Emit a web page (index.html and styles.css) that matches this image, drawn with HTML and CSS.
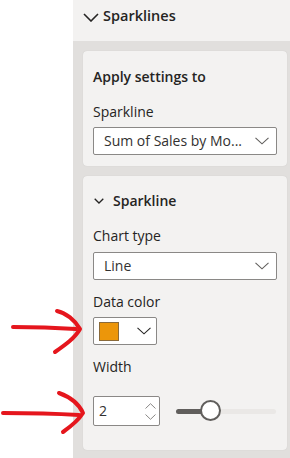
FILE: index.html
```html
<!DOCTYPE html>
<html lang="en">
<head>
  <meta charset="UTF-8">
  <title>Sparklines</title>
  <meta name="viewport" content="width=device-width, initial-scale=1.0">
  <link rel="stylesheet" href="styles.css">
</head>
<body>
  <div class="screen">
    <div class="gutter"></div>

    <div class="pane">
      <!-- section header -->
      <div class="pane-header">
        <svg class="chevron-lg" width="16" height="9" viewBox="0 0 16 9">
          <path d="M1 1 L8 8 L15 1" fill="none" stroke="#252423" stroke-width="1.6"/>
        </svg>
        <span>Sparklines</span>
      </div>

      <!-- apply settings card -->
      <div class="card card-apply">
        <div class="card-title">Apply settings to</div>
        <div class="label">Sparkline</div>
        <div class="dropdown">
          <span class="dropdown-text">Sum of Sales by Mo...</span>
          <svg width="14" height="8" viewBox="0 0 14 8">
            <path d="M0.5 0.8 L7 6.8 L13.5 0.8" fill="none" stroke="#605e5c" stroke-width="1.1"/>
          </svg>
        </div>
      </div>

      <!-- sparkline card -->
      <div class="card card-sparkline">
        <div class="section-title">
          <svg width="10" height="6" viewBox="0 0 10 6">
            <path d="M0.7 0.7 L5 5 L9.3 0.7" fill="none" stroke="#252423" stroke-width="1.3"/>
          </svg>
          <span>Sparkline</span>
        </div>

        <div class="label label-chart">Chart type</div>
        <div class="dropdown dropdown-chart">
          <span class="dropdown-text">Line</span>
          <svg width="14" height="8" viewBox="0 0 14 8">
            <path d="M0.5 0.8 L7 6.8 L13.5 0.8" fill="none" stroke="#605e5c" stroke-width="1.1"/>
          </svg>
        </div>

        <div class="label label-color">Data color</div>
        <div class="color-button">
          <span class="swatch"></span>
          <svg width="14" height="8" viewBox="0 0 14 8">
            <path d="M0.5 0.8 L7 6.8 L13.5 0.8" fill="none" stroke="#252423" stroke-width="1.1"/>
          </svg>
        </div>

        <div class="label label-width">Width</div>
        <div class="width-row">
          <div class="number-box">
            <span>2</span>
            <div class="spinner">
              <svg width="11" height="6" viewBox="0 0 11 6">
                <path d="M0.5 5.5 L5.5 0.7 L10.5 5.5" fill="none" stroke="#8a8886" stroke-width="1"/>
              </svg>
              <svg width="11" height="6" viewBox="0 0 11 6">
                <path d="M0.5 0.5 L5.5 5.3 L10.5 0.5" fill="none" stroke="#8a8886" stroke-width="1"/>
              </svg>
            </div>
          </div>
          <div class="slider">
            <div class="track"><div class="track-fill"></div></div>
            <div class="thumb"></div>
          </div>
        </div>
      </div>
    </div>

    <!-- hand-drawn arrows on top of the screenshot -->
    <svg class="annotations" width="290" height="458" viewBox="0 0 290 458">
      <g fill="none" stroke="#e5161d" stroke-width="4" stroke-linecap="round" stroke-linejoin="round">
        <path d="M13 327 Q45 327 76 329"/>
        <path d="M57 311 C66 313 75 320 80 329 C75 338 65 345 55 352"/>
        <path d="M3 413 Q45 413 79 415"/>
        <path d="M59 393 C70 397 79 404 83 413 C78 421 70 427 63 432"/>
      </g>
    </svg>
  </div>
</body>
</html>
```

FILE: styles.css
```css
body {
  margin: 0;
  font-family: "Open Sans", "Noto Sans", sans-serif;
  font-size: 14px;
  line-height: 20px;
  color: #252423;
  background-color: #fff;
}

.screen {
  position: relative;
  display: flex;
  width: 290px;
  height: 458px;
  overflow: hidden;
}

.gutter {
  flex: none;
  width: 73px;
  background-color: #fff;
}

.pane {
  flex: 1;
  display: flex;
  flex-direction: column;
  background-color: #e1dfdd;
}

.pane-header {
  box-sizing: border-box;
  height: 41px;
  padding: 6px 0 0 10px;
  display: flex;
  align-items: flex-start;
  gap: 4px;
  background-color: #f3f2f1;
  font-size: 14.5px;
  font-weight: 600;
}

.chevron-lg {
  margin-top: 7px;
}

.card {
  margin: 10px 3px 0 10px;
  padding: 16px 10px 11px 10px;
  background-color: #f3f2f1;
  border-radius: 4px;
  box-shadow: 0 0 1px rgba(0, 0, 0, 0.15);
}

.card-sparkline {
  padding-top: 15px;
  padding-bottom: 24px;
}

.card-title {
  font-weight: 600;
}

.label {
  margin-top: 15px;
}

.label-color {
  margin-top: 12px;
}

.label-width {
  margin-top: 12px;
}

.dropdown {
  box-sizing: border-box;
  height: 28px;
  margin-top: 5px;
  padding: 0 7px 0 10px;
  display: flex;
  align-items: center;
  justify-content: space-between;
  background-color: #fff;
  border: 1px solid #8a8886;
  border-radius: 2px;
  color: #323130;
}

.dropdown-chart {
  margin-top: 6px;
}

.section-title {
  display: flex;
  align-items: center;
  gap: 9px;
  padding-left: 1px;
  font-weight: 600;
}

.color-button {
  box-sizing: border-box;
  width: 64px;
  height: 28px;
  margin-top: 5px;
  padding: 0 5px 0 5px;
  display: flex;
  align-items: center;
  justify-content: space-between;
  background-color: #fff;
  border: 1px solid #8a8886;
  border-radius: 2px;
}

.swatch {
  box-sizing: border-box;
  width: 20px;
  height: 19px;
  background-color: #ec960a;
  border: 1px solid #8a6a3a;
}

.width-row {
  margin-top: 19px;
  display: flex;
  align-items: center;
}

.number-box {
  box-sizing: border-box;
  width: 67px;
  height: 30px;
  padding: 0 3px 0 5px;
  display: flex;
  align-items: center;
  justify-content: space-between;
  background-color: #fff;
  border: 1px solid #8a8886;
  border-radius: 2px;
  color: #323130;
}

.spinner {
  display: flex;
  flex-direction: column;
  gap: 5px;
}

.spinner svg {
  display: block;
}

.slider {
  position: relative;
  width: 100px;
  height: 22px;
  margin-left: 16px;
  display: flex;
  align-items: center;
}

.track {
  width: 100%;
  height: 5px;
  border-radius: 3px;
  background-color: #eae8e6;
  overflow: hidden;
}

.track-fill {
  width: 32px;
  height: 100%;
  background-color: #605e5c;
}

.thumb {
  position: absolute;
  left: 24px;
  top: 0;
  box-sizing: border-box;
  width: 21px;
  height: 21px;
  border: 2px solid #605e5c;
  border-radius: 50%;
  background-color: #fff;
}

.annotations {
  position: absolute;
  left: 0;
  top: 0;
  pointer-events: none;
}
```
